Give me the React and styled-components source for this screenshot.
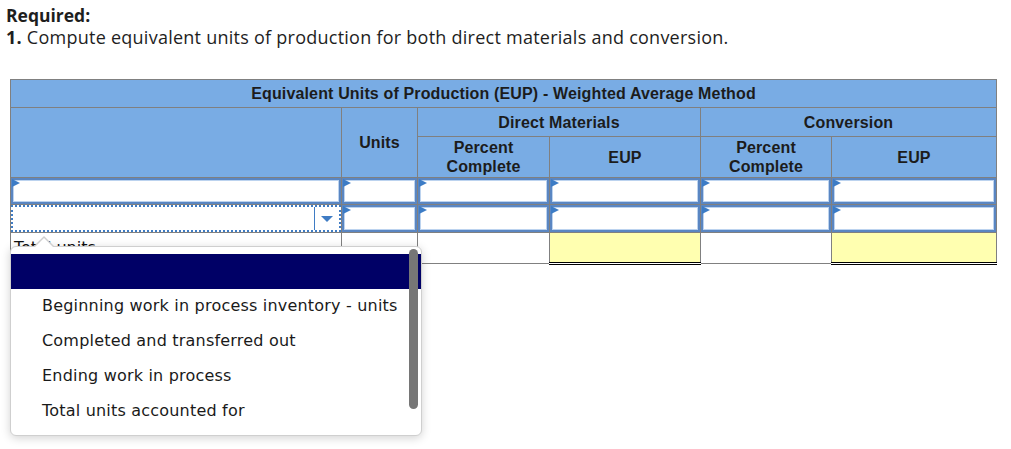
import React from 'react';
import styled, { createGlobalStyle } from 'styled-components';

const Global = createGlobalStyle`
  body {
    margin: 0;
    background: #fff;
    font-family: "Liberation Sans", Arial, sans-serif;
  }
`;

const Page = styled.div`
  position: relative;
  width: 1011px;
  height: 449px;
  padding: 4px 0 0 6px;
  box-sizing: border-box;
  color: #1e1e1e;
`;

const Heading = styled.div`
  font-family: "Open Sans", Arial, sans-serif;
  font-size: 17.5px;
  line-height: 22px;
  font-weight: 700;
`;

const Instruction = styled.div`
  font-family: "Open Sans", Arial, sans-serif;
  font-size: 18px;
  letter-spacing: 0.25px;
  line-height: 22px;
  b {
    font-weight: 700;
  }
`;

const Table = styled.table`
  border-collapse: collapse;
  table-layout: fixed;
  margin: 31px 0 0 4px;
  width: 986px;
  font-family: "Liberation Sans", Arial, sans-serif;
`;

const Head = styled.th`
  background: #79ace4;
  border: 1px solid #808080;
  font-size: 16px;
  letter-spacing: 0.15px;
  font-weight: 700;
  line-height: 19px;
  color: #1c1c1c;
  text-align: center;
  vertical-align: middle;
  padding: 0;
  height: ${p => p.h || 27}px;
`;

const Cell = styled.td`
  position: relative;
  border: 1px solid #808080;
  border-top: ${p => (p.sum ? '1px solid #000' : '1px solid #808080')};
  border-bottom: ${p => (p.total ? '3px double #000' : '1px solid #808080')};
  background: ${p => (p.total ? '#ffffb0' : '#fff')};
  padding: 0;
  height: ${p => p.h || 26}px;
  vertical-align: top;
`;

const Field = styled.div`
  position: relative;
  height: 100%;
  box-sizing: border-box;
  border: 2px solid #5a86c2;
  box-shadow: inset 0 0 0 1px #bcd3ef;
  &::before {
    content: '';
    position: absolute;
    left: -1px;
    top: -1px;
    border-left: 8px solid #3c7cc6;
    border-top: 4px solid transparent;
    border-bottom: 4px solid transparent;
  }
`;

const Select = styled.div`
  height: 100%;
  box-sizing: border-box;
  border: 2px dotted #3f7cc4;
  display: flex;
  justify-content: flex-end;
`;

const Caret = styled.div`
  width: 24px;
  border-left: 1px solid #3f7cc4;
  display: flex;
  align-items: center;
  justify-content: center;
  &::after {
    content: '';
    border-top: 6px solid #3f7cc4;
    border-left: 6px solid transparent;
    border-right: 6px solid transparent;
  }
`;

const LabelText = styled.div`
  font-family: "DejaVu Sans", Verdana, sans-serif;
  font-size: 16px;
  color: #111;
  padding: 5px 0 0 3px;
`;

const Popup = styled.div`
  position: absolute;
  left: 10px;
  top: 246px;
  width: 412px;
  height: 190px;
  box-sizing: border-box;
  background: #fff;
  border: 1px solid #cfcfcf;
  border-radius: 6px;
  box-shadow: 0 2px 10px rgba(0, 0, 0, 0.18);
  padding-top: 7px;
  font-family: "DejaVu Sans", Verdana, sans-serif;
  font-size: 16px;
  letter-spacing: 0.2px;
  color: #1a1a1a;
  &::before {
    content: '';
    position: absolute;
    left: 22px;
    top: -11px;
    border-bottom: 11px solid #cfcfcf;
    border-left: 11px solid transparent;
    border-right: 11px solid transparent;
  }
  &::after {
    content: '';
    position: absolute;
    left: 23px;
    top: -9px;
    border-bottom: 10px solid #fff;
    border-left: 10px solid transparent;
    border-right: 10px solid transparent;
  }
`;

const Option = styled.div`
  height: 35px;
  line-height: 33px;
  padding-left: 31px;
  background: ${p => (p.active ? '#000066' : 'transparent')};
  margin-right: ${p => (p.active ? '0' : '20px')};
  white-space: nowrap;
`;

const Thumb = styled.div`
  position: absolute;
  right: 3px;
  top: 2px;
  width: 9px;
  height: 160px;
  border-radius: 5px;
  background: #767676;
`;

const options = [
  '',
  'Beginning work in process inventory - units',
  'Completed and transferred out',
  'Ending work in process',
  'Total units accounted for',
];

const InputRow = ({ label, h }) => (
  <tr>
    <Cell h={h}>{label}</Cell>
    {[0, 1, 2, 3, 4].map(i => (
      <Cell key={i} h={h}>
        <Field />
      </Cell>
    ))}
  </tr>
);

export default function App() {
  return (
    <Page>
      <Global />
      <Heading>Required:</Heading>
      <Instruction>
        <b>1.</b> Compute equivalent units of production for both direct materials and conversion.
      </Instruction>
      <Table>
        <colgroup>
          <col style={{ width: 331 }} />
          <col style={{ width: 76 }} />
          <col style={{ width: 132 }} />
          <col style={{ width: 151 }} />
          <col style={{ width: 131 }} />
          <col style={{ width: 165 }} />
        </colgroup>
        <thead>
          <tr>
            <Head colSpan={6} h={27}>
              Equivalent Units of Production (EUP) - Weighted Average Method
            </Head>
          </tr>
          <tr>
            <Head rowSpan={2} />
            <Head rowSpan={2}>Units</Head>
            <Head colSpan={2} h={28}>Direct Materials</Head>
            <Head colSpan={2} h={28}>Conversion</Head>
          </tr>
          <tr>
            <Head h={40}>Percent<br />Complete</Head>
            <Head h={40}>EUP</Head>
            <Head h={40}>Percent<br />Complete</Head>
            <Head h={40}>EUP</Head>
          </tr>
        </thead>
        <tbody>
          <InputRow h={26} label={<Field />} />
          <InputRow
            h={27}
            label={
              <Select>
                <Caret />
              </Select>
            }
          />
          <tr>
            <Cell h={29}>
              <LabelText>Total units</LabelText>
            </Cell>
            <Cell h={29} sum />
            <Cell h={29} sum />
            <Cell h={29} sum total />
            <Cell h={29} sum />
            <Cell h={29} sum total />
          </tr>
        </tbody>
      </Table>
      <Popup>
        {options.map((o, i) => (
          <Option key={i} active={i === 0}>
            {o}
          </Option>
        ))}
        <Thumb />
      </Popup>
    </Page>
  );
}
